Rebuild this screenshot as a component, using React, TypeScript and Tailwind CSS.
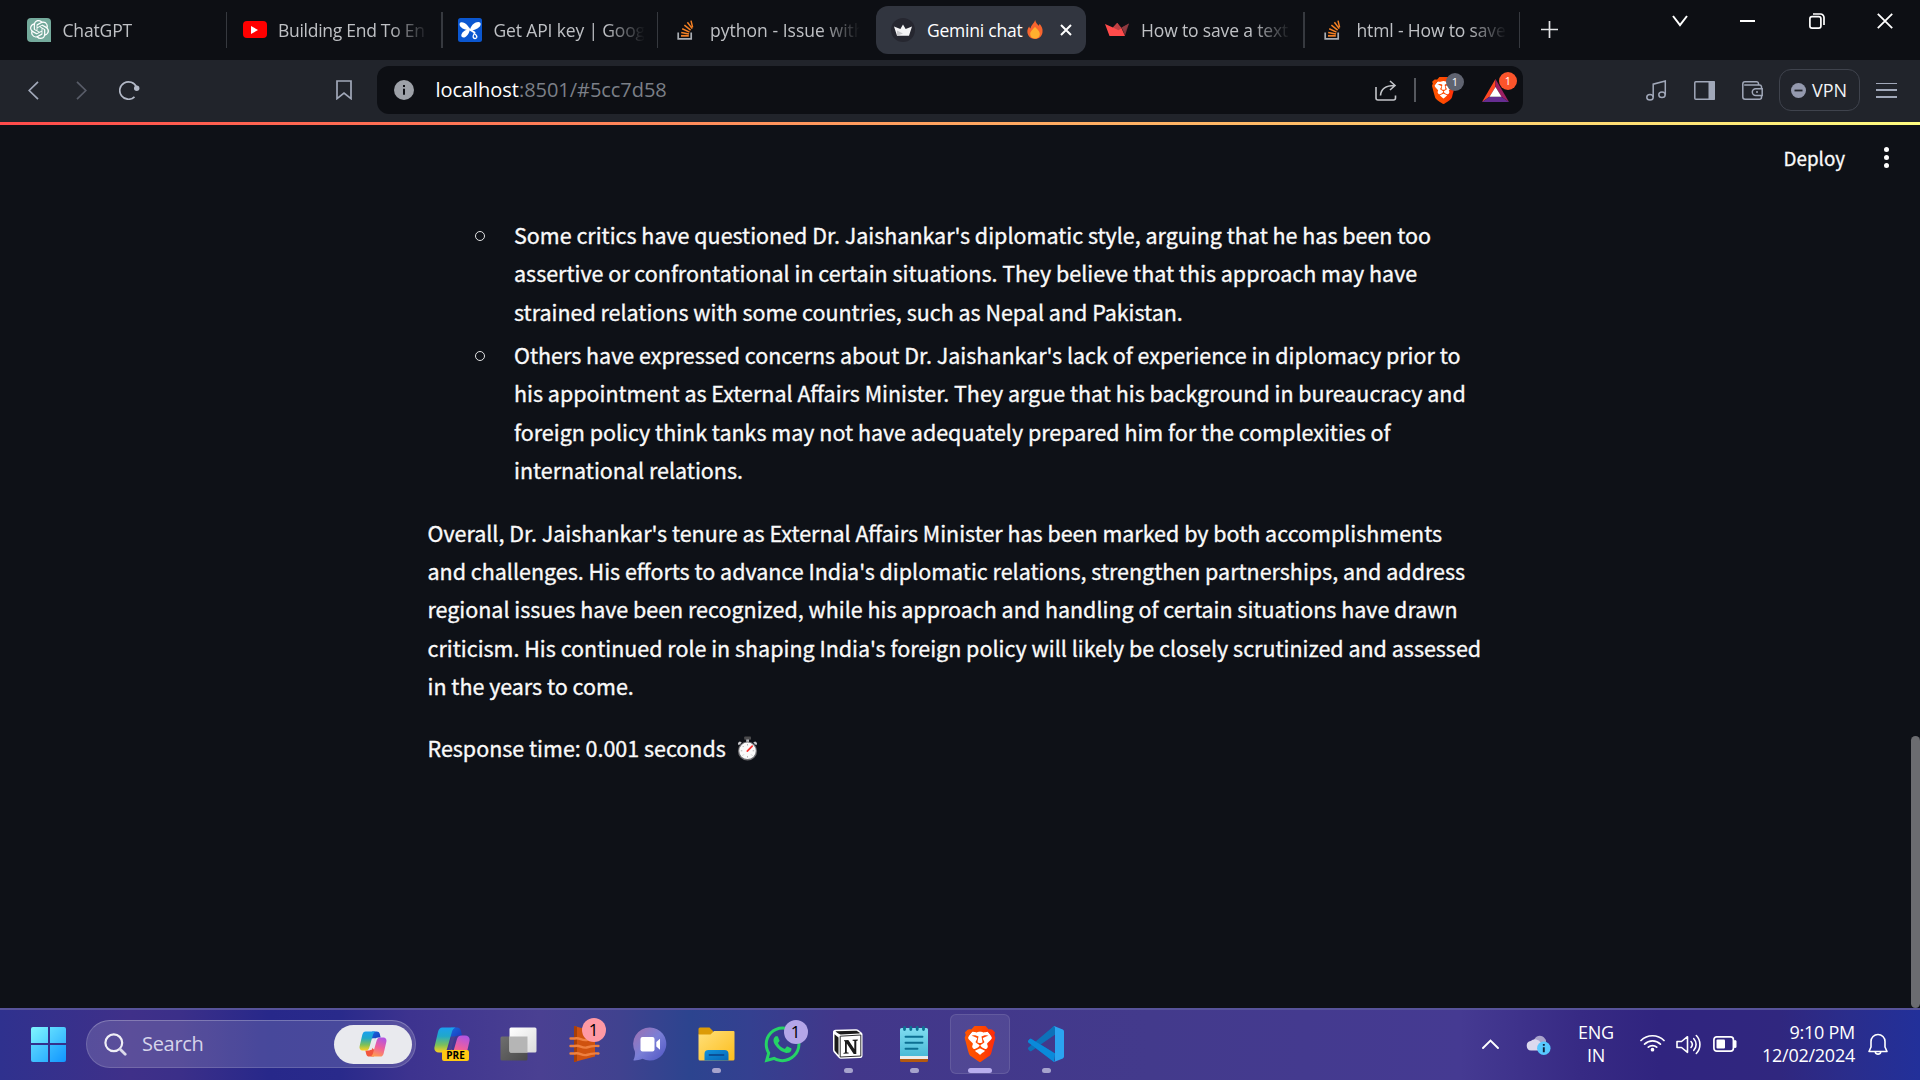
import React from "react";
import { SiOpenai, SiBrave } from "react-icons/si";
import { FaWhatsapp } from "react-icons/fa";

/* ---------- small drawings ---------- */

const StackOverflow = () => (
  <svg className="h-[20px] w-[17px]" viewBox="0 0 17 20" fill="none">
    <path d="M1.2 12.5v6.3h13v-6.3" stroke="#a9adb3" strokeWidth="1.7" />
    <path d="M4 15.8h7.8" stroke="#f48024" strokeWidth="1.8" />
    <path d="M4.2 12.4l7.8 1.6M5.2 8.8l7.3 3.3M7.4 5.2l6.2 5M10.4 2.2l4.8 6.4M14 .6l1.6 6.8" stroke="#f48024" strokeWidth="1.5" />
  </svg>
);

const GoogleAi = () => (
  <svg className="size-[24px]" viewBox="0 0 24 24">
    <rect width="24" height="24" rx="2.5" fill="#0b57d0" />
    <path d="M12.3 12.2C10.5 8 7.5 4 3.2 4.3 1.2 4.6 1 7 2.5 8.7c2.4 2.7 6.5 3.3 9.8 3.5z" fill="#fff" />
    <path d="M11.5 13.2C12.5 8.5 15.5 4 20.5 4c2.5.1 2.800 2.600 1.300 4.400-2.300 2.700-6.300 3.800-10.300 4.800z" fill="#fff" />
    <path d="M11.500 9.500c.8 4-1.500 8-4.500 9.700-2 1-4.300-.3-3.600-2.600.9-3 4.200-4.600 7.100-6.100z" fill="#fff" />
    <path d="M12.500 12l4 2.500" stroke="#fff" strokeWidth="2" strokeLinecap="round" />
    <path d="M16.300 15.500c1.800 1.200 3 2.600 2.400 4-.7 1.400-3 1.300-3.500-.2-.4-1.200.4-2.500 1.100-3.800z" fill="#0b57d0" stroke="#fff" strokeWidth="1.300" />
  </svg>
);

const Flame = () => (
  <svg className="h-[19px] w-[16px]" viewBox="0 0 16 19">
    <path d="M8.200 0c.4 2.700 2 4 3.500 5.700.5-.5.800-1.200.900-1.900C14.800 6.300 16 9 15.500 12.200 15 16.200 11.800 19 8 19S.8 16.200.4 12.500C.1 10 1 7.900 2.200 6.400c.2 1 .6 1.600 1.200 2C4.300 4.800 7.200 3.400 8.200 0z" fill="#f8652e" />
    <path d="M8 6.800c1.900 2.500 4.800 4.300 4.800 7.400C12.800 17 10.600 18.600 8 18.600S3.200 17 3.200 14.200C3.200 11.200 6.200 9.300 8 6.800z" fill="#ffb02e" />
  </svg>
);

const Stopwatch = () => (
  <svg className="h-[25px] w-[21px]" viewBox="0 0 21 25">
    <rect x="7.200" y=".5" width="6.800" height="3.200" rx=".8" fill="#4a4a4c" />
    <rect x="9.200" y="3.500" width="2.800" height="2.500" fill="#b9b9bd" />
    <path d="M3.200 8.200L1.500 9.300.9 7l1.800-1.400 2 .6zM17.800 8.200l1.700 1.100.6-2.300-1.800-1.400-2 .6z" fill="#c9c9cd" />
    <circle cx="10.500" cy="15" r="9.600" fill="#6e6e72" />
    <circle cx="10.500" cy="14.800" r="8.300" fill="#fafafa" />
    <path d="M10.500 8v1.500M10.500 20v1.500M3.800 14.800h1.500M15.700 14.800h1.500M5.700 10l1 1M15.300 19.600l-1-1M5.700 19.600l1-1" stroke="#aaaaae" strokeWidth=".9" />
    <path d="M10.300 15.200l4.900-5" stroke="#f8312f" strokeWidth="1.700" strokeLinecap="round" />
  </svg>
);

const BraveLion = ({ className = "", id }: { className?: string; id: string }) => (
  <span className="relative block">
    <svg className={className} viewBox="0 0 24 24">
      <defs>
        <linearGradient id={id} x1="0" x2="1">
          <stop offset="0" stopColor="#ff5601" />
          <stop offset=".5" stopColor="#ff4a00" />
          <stop offset="1" stopColor="#ff2a0a" />
        </linearGradient>
      </defs>
      <path d="M7 3.500h10l3.500 4-2.500 9-6 5.500-6-5.500-2.500-9z" fill="#fff" />
    </svg>
    <span className="absolute inset-0">
      <SiBrave className={className} fill={`url(#${id})`} />
    </span>
  </span>
);

const Copilot = ({ className = "", id, gap }: { className?: string; id: string; gap: string }) => (
  <svg className={className} viewBox="0 0 36 34">
    <defs>
      <linearGradient id={`${id}a`} x1="0" y1="0" x2="0" y2="1">
        <stop offset="0" stopColor="#1b9ff0" />
        <stop offset=".35" stopColor="#21a8c9" />
        <stop offset=".7" stopColor="#7cc05a" />
        <stop offset="1" stopColor="#ffd01f" />
      </linearGradient>
      <linearGradient id={`${id}b`} x1=".6" y1="0" x2=".3" y2="1">
        <stop offset="0" stopColor="#b455e0" />
        <stop offset=".5" stopColor="#f0609a" />
        <stop offset="1" stopColor="#ff9d4d" />
      </linearGradient>
      <linearGradient id={`${id}c`} x1="0" y1="0" x2="1" y2="1">
        <stop offset="0" stopColor="#1a6be0" />
        <stop offset="1" stopColor="#1a35b8" />
      </linearGradient>
    </defs>
    <path d="M17 .5h6c2 0 3.200 1 3.800 3L28 8.500h-3c-3 0-4.500 1-5.500 4L14 7z" fill={`url(#${id}c)`} />
    <path d="M19 33.500h-6c-2 0-3.200-1-3.800-3L8 25.500h3c3 0 4.500-1 5.500-4L22 27z" fill="#f2553c" />
    <path d="M8.500.5h13c-2 .8-3 2.500-3.600 4.600l-4.600 16C12.600 24 11 25.500 8 25.500H5c-3.600 0-5.300-2.600-4.400-6L4 5C4.800 2 6 .5 8.500.5z" fill={`url(#${id}a)`} />
    <path d="M27.500 33.500h-13c2-.8 3-2.500 3.600-4.600l4.600-16c.7-2.900 2.300-4.400 5.300-4.400h3c3.600 0 5.300 2.600 4.400 6L32 29c-.8 3-2 4.500-4.500 4.500z" fill={`url(#${id}b)`} />
    <path d="M17.200 9.500h4.300c-.8.900-1.300 2-1.700 3.500l-3.300 11.500h-3c.7-.8 1.100-1.800 1.500-3.200z" fill={gap} />
  </svg>
);

/* ---------- browser chrome ---------- */

type TabInfo = { icon: React.ReactNode; title: string; text: string; active?: boolean; rule: boolean };

const tabs: TabInfo[] = [
  {
    rule: false, title: "ChatGPT", text: "tracking-[-0.15px]",
    icon: (
      <span className="flex size-[24px] items-center justify-center rounded-[4px] rounded-br-none bg-[#74aa9c] text-white">
        <SiOpenai className="size-[19px]" />
      </span>
    ),
  },
  {
    rule: true, title: "Building End To En", text: "tracking-[-0.28px]",
    icon: (
      <span className="flex h-[17px] w-[24px] items-center justify-center rounded-[4px] bg-[#ff0000]">
        <svg className="h-[8px] w-[7px]" viewBox="0 0 7 8"><path d="M0 0l7 4-7 4z" fill="#fff" /></svg>
      </span>
    ),
  },
  { rule: true, title: "Get API key | Goog", text: "tracking-[-0.15px]", icon: <GoogleAi /> },
  { rule: true, title: "python - Issue with", text: "pl-[1px] tracking-[0.03px]", icon: <StackOverflow /> },
  {
    rule: false, active: true, title: "Gemini chat", text: "tracking-[-0.22px]",
    icon: (
      <span className="flex size-[24px] items-center justify-center rounded-full bg-[#262730] text-white">
        <svg className="h-[12px] w-[18px]" viewBox="0 0 24 15"><path d="M12 0l3.500 6L24 2.800 20 15H4L0 2.800 8.500 6z" fill="#f4f4f5" /><path d="M4 8l8 4-8 3z" fill="#c9c9cc" /></svg>
      </span>
    ),
  },
  {
    rule: false, title: "How to save a text", text: "pl-[1px] tracking-[-0.15px]",
    icon: (
      <svg className="h-[13px] w-[24px]" viewBox="0 0 24 13">
        <path d="M24 .4L16.500 4.600 20 12.400z" fill="#7d353b" />
        <path d="M0 1l8 3.600L12.200 0l4.300 5.200L20 13H4.500z" fill="#ff4b4b" />
        <path d="M12.200 0l4.300 5.200-3 2L8 4.600z" fill="#bd4043" />
        <path d="M16.500 4.800L24 .4l-4.200 8.100z" fill="#8e3a40" />
      </svg>
    ),
  },
  { rule: true, title: "html - How to save", text: "pl-[1px] tracking-[-0.15px]", icon: <StackOverflow /> },
];

function Tab({ t }: { t: TabInfo }) {
  return (
    <div className="flex h-[60px] w-[215.5px] shrink-0 items-center">
      <div className={t.rule ? "h-[36px] w-[1.5px] bg-[#36393f]" : "h-[36px] w-[1.5px]"} />
      <div
        className={
          t.active
            ? "ml-[2.5px] flex h-[48px] w-[210px] items-center rounded-[12px] bg-[#31353f] pl-[15px] text-white"
            : "flex h-[48px] w-[214px] items-center pl-[15.5px] text-[#bfc1c5]"
        }
      >
        <div className="flex size-[24px] shrink-0 items-center justify-center">{t.icon}</div>
        {t.active ? (
          <>
            <span className={`ml-[12px] whitespace-nowrap text-[17.5px] leading-[24px] ${t.text}`}>{t.title}</span>
            <div className="ml-[4px] flex"><Flame /></div>
            <svg className="ml-[17px] size-[12px]" viewBox="0 0 12 12"><path d="M1 1l10 10M11 1L1 11" stroke="#fff" strokeWidth="2" /></svg>
          </>
        ) : (
          <span
            className={`ml-[11.5px] w-[160px] whitespace-nowrap text-[17.5px] leading-[24px] [mask-image:linear-gradient(to_right,black_112px,transparent_151px)] ${t.text}`}
          >
            {t.title}
          </span>
        )}
      </div>
    </div>
  );
}

function TabStrip() {
  return (
    <div className="flex h-[60px] items-center bg-[#0d0f14] pb-[1px] pl-[10px]">
      {tabs.map((t) => <Tab key={t.title} t={t} />)}
      <div className="h-[36px] w-[1.5px] bg-[#36393f]" />
      <svg className="ml-[21px] size-[17px]" viewBox="0 0 17 17"><path d="M8.500 0v17M0 8.500h17" stroke="#e4e5e7" strokeWidth="1.700" /></svg>
      <div className="mb-[17px] ml-auto mr-[27px] flex items-center">
        <svg className="h-[12px] w-[16px]" viewBox="0 0 16 12"><path d="M1 1l7 9 7-9" fill="none" stroke="#fff" strokeWidth="2" /></svg>
        <div className="ml-[52px] h-[2px] w-[15px] bg-white" />
        <svg className="ml-[54px] size-[16px]" viewBox="0 0 16 16" fill="none" stroke="#fff" strokeWidth="1.700">
          <rect x=".9" y="3.600" width="11" height="11.500" rx="2.200" />
          <path d="M4 1h7.500A3.500 3.500 0 0115 4.500V12" />
        </svg>
        <svg className="ml-[52px] size-[16px]" viewBox="0 0 16 16"><path d="M.8.8l14.400 14.400M15.200.8L.8 15.200" stroke="#fff" strokeWidth="1.800" /></svg>
      </div>
    </div>
  );
}

function Toolbar() {
  return (
    <div className="flex h-[62px] items-center bg-[#21242b] pb-[2px] pl-[28px] text-[#a1a8b9]">
      <svg className="h-[19px] w-[11px]" viewBox="0 0 11 19"><path d="M10 .8L1.200 9.500 10 18.200" fill="none" stroke="currentColor" strokeWidth="1.700" /></svg>
      <svg className="ml-[37px] h-[19px] w-[11px]" viewBox="0 0 11 19"><path d="M1 .8l8.800 8.700L1 18.200" fill="none" stroke="#585c68" strokeWidth="1.700" /></svg>
      <svg className="ml-[32px] h-[20px] w-[21px]" viewBox="0 0 21 20">
        <path d="M17.500 7.200A8.700 8.700 0 1015.500 16.800" fill="none" stroke="#b3b9c7" strokeWidth="1.700" />
        <circle cx="17.700" cy="8.200" r="2.700" fill="#b3b9c7" />
      </svg>
      <svg className="ml-[196px] h-[20px] w-[16px]" viewBox="0 0 16 20"><path d="M1 1h14v17.600l-7-5.500-7 5.500z" fill="none" stroke="currentColor" strokeWidth="1.700" /></svg>

      <div className="ml-[25px] flex h-[48px] w-[1146px] items-center rounded-[12px] bg-[#0d0f14] pl-[17px]">
        <svg className="size-[20px]" viewBox="0 0 20 20">
          <circle cx="10" cy="10" r="10" fill="#9da1a8" />
          <path d="M10 8.800v6M10 5v2" stroke="#0d0f14" strokeWidth="2" />
        </svg>
        <div className="ml-[21.500px] whitespace-nowrap text-[20px] leading-[28px] tracking-[-0.040px] text-white">
          localhost<span className="text-[#7b7f87]">:8501/#5cc7d58</span>
        </div>
        <svg className="ml-auto h-[21px] w-[22px]" viewBox="0 0 22 21" fill="none" stroke="#c3c5c9" strokeWidth="1.600">
          <path d="M1 7v11c0 1.200.7 2 2 2h15.500c1.300 0 2-.8 2-2v-2.500" />
          <path d="M5.500 15.500C6 9 10 5.500 19.500 5.500M15 1l5 4.500-5 4.500" />
        </svg>
        <div className="ml-[17px] h-[24px] w-[2px] bg-[#55585e]" />
        <div className="relative ml-[14px]">
          <BraveLion id="lionSmall" className="size-[27px]" />
          <span className="absolute left-[16px] top-[-4px] flex h-[18px] w-[18px] items-center justify-center rounded-[9px] bg-[#5f6370] text-[11px] leading-[18px] text-white">1</span>
        </div>
        <div className="relative ml-[25px] mr-[14px]">
          <svg className="h-[23px] w-[27px]" viewBox="0 0 27 23">
            <path d="M13.500 0L0 23l7.500-5.300 6-9.700z" fill="#ff4724" />
            <path d="M13.500 0L27 23l-7.500-5.300-6-9.700z" fill="#9e1f63" />
            <path d="M0 23h27l-7.500-5.300h-12z" fill="#662d91" />
            <path d="M13.500 8l6 9.700h-12z" fill="#fff" />
          </svg>
          <span className="absolute left-[17px] top-[-7px] flex h-[18px] w-[18px] items-center justify-center rounded-[9px] bg-[#fb542b] text-[11px] leading-[18px] text-white">1</span>
        </div>
      </div>

      <div className="ml-auto flex items-center pr-[23px]">
        <svg className="size-[21px]" viewBox="0 0 21 21" fill="none" stroke="currentColor" strokeWidth="1.500">
          <ellipse cx="4" cy="17.300" rx="3.200" ry="2.800" />
          <ellipse cx="16" cy="14.800" rx="3.200" ry="2.800" />
          <path d="M7.200 17.300V4.200L19.300 1v13.800" />
        </svg>
        <svg className="ml-[27px] h-[19px] w-[21px]" viewBox="0 0 21 19">
          <rect x=".8" y=".8" width="19.400" height="17.400" rx="1" fill="none" stroke="currentColor" strokeWidth="1.500" />
          <path d="M14.500 0h5.500a1 1 0 011 1v17a1 1 0 01-1 1h-5.500z" fill="currentColor" />
        </svg>
        <svg className="ml-[27px] h-[19px] w-[21px]" viewBox="0 0 21 19" fill="none" stroke="currentColor" strokeWidth="1.500">
          <path d="M.8 3v13A2.200 2.200 0 003 18.200h14.500a2 2 0 002-2v-1.700M19.500 7.700V5.600a2 2 0 00-2-1.600H2.200M.8 3A2.200 2.200 0 013 .8h11.500a2 2 0 012 2V4" />
          <path d="M20.200 7.700h-6.500a3.400 3.400 0 000 6.800h6.500zM14 11.100h2" />
        </svg>
        <div className="ml-[16px] flex h-[42px] w-[81px] items-center rounded-[12px] border-[1.500px] border-[#3f434d] pl-[11px]">
          <svg className="size-[15px] shrink-0" viewBox="0 0 15 15"><circle cx="7.500" cy="7.500" r="7.500" fill="#9499ae" /><path d="M3.500 7.500h8" stroke="#21242b" strokeWidth="1.800" /></svg>
          <span className="ml-[6px] text-[18px] leading-[24px] text-[#f2f3f5]">VPN</span>
        </div>
        <div className="ml-[16px] flex h-[15px] w-[21px] flex-col justify-between">
          <div className="h-[1.500px] bg-[#a1a8b9]" /><div className="h-[1.500px] bg-[#a1a8b9]" /><div className="h-[1.500px] bg-[#a1a8b9]" />
        </div>
      </div>
    </div>
  );
}

/* ---------- page ---------- */

const bullets = [
  [
    "Some critics have questioned Dr. Jaishankar's diplomatic style, arguing that he has been too",
    "assertive or confrontational in certain situations. They believe that this approach may have",
    "strained relations with some countries, such as Nepal and Pakistan.",
  ],
  [
    "Others have expressed concerns about Dr. Jaishankar's lack of experience in diplomacy prior to",
    "his appointment as External Affairs Minister. They argue that his background in bureaucracy and",
    "foreign policy think tanks may not have adequately prepared him for the complexities of",
    "international relations.",
  ],
];

const overall = [
  "Overall, Dr. Jaishankar's tenure as External Affairs Minister has been marked by both accomplishments",
  "and challenges. His efforts to advance India's diplomatic relations, strengthen partnerships, and address",
  "regional issues have been recognized, while his approach and handling of certain situations have drawn",
  "criticism. His continued role in shaping India's foreign policy will likely be closely scrutinized and assessed",
  "in the years to come.",
];

const Lines = ({ lines }: { lines: string[] }) => (
  <>{lines.map((l) => <span key={l} className="block whitespace-nowrap">{l}</span>)}</>
);

function Page() {
  return (
    <div className="flex h-[886px] flex-col bg-[#0e1117] font-['Noto_Sans_CJK_SC','Noto_Sans',sans-serif] text-[#fafafa]">
      <div className="h-[3px] shrink-0 bg-[linear-gradient(to_right,#ff4b4b,#ffa560_50%,#ffbc67_67%,#fffd80)]" />
      <div className="flex min-h-0 flex-1">
        <div className="flex flex-1 flex-col">
          <div className="flex h-[65px] items-center">
            <span className="ml-auto text-[18.800px] leading-[28px] [-webkit-text-stroke:0.3px]">Deploy</span>
            <div className="ml-[39px] mr-[22px] flex flex-col gap-[3px]">
              <div className="size-[5px] rounded-full bg-white" /><div className="size-[5px] rounded-full bg-white" /><div className="size-[5px] rounded-full bg-white" />
            </div>
          </div>
          <div className="ml-[427.500px] mt-[26px] flex flex-col gap-[24px] text-[21.480px] leading-[38.400px] [-webkit-text-stroke:0.35px]">
            <ul className="flex flex-col gap-[4.800px] pl-[47.500px]">
              {bullets.map((b) => (
                <li key={b[0]} className="flex">
                  <span className="mt-[14.500px] h-[10px] w-[10px] shrink-0 rounded-full border-[1.200px] border-[#e2e3e4]" />
                  <p className="ml-[29px]"><Lines lines={b} /></p>
                </li>
              ))}
            </ul>
            <p><Lines lines={overall} /></p>
            <p className="flex h-[38px] items-center">Response time: 0.001 seconds<span className="ml-[11px]"><Stopwatch /></span></p>
          </div>
        </div>
        <div className="flex w-[9px] flex-col justify-end">
          <div className="h-[272px] rounded-[5px] bg-[#6b6c70]" />
        </div>
      </div>
    </div>
  );
}

/* ---------- taskbar ---------- */

const Cell = ({ children, mark }: { children: React.ReactNode; mark?: "dot" | "bar" }) => (
  <div className={mark === "bar"
    ? "relative mx-[3px] flex h-[60px] w-[60px] shrink-0 items-center justify-center rounded-[6px] border border-white/10 bg-white/8"
    : "relative flex h-[60px] w-[66px] shrink-0 items-center justify-center"}>
    {children}
    {mark === "dot" && <span className="absolute bottom-[1px] left-[29px] h-[5px] w-[9px] rounded-full bg-[#a6a3cd]" />}
    {mark === "bar" && <span className="absolute bottom-0 left-[17px] h-[5px] w-[24px] rounded-full bg-[#b9aeee]" />}
  </div>
);

function TaskIcons() {
  return (
    <>
      <Cell>
        <div className="relative">
          <Copilot id="cpTask" gap="#47408f" className="h-[34px] w-[36px]" />
          <span className="absolute left-[8px] top-[23px] flex h-[11px] w-[27px] items-center justify-center rounded-[2px] bg-[#ffc913] text-[10px] font-bold leading-[11px] text-black">PRE</span>
        </div>
      </Cell>
      <Cell>
        <svg className="h-[34px] w-[37px]" viewBox="0 0 37 34">
          <defs>
            <linearGradient id="tvA" x1="0" y1="0" x2="1" y2="1"><stop offset="0" stopColor="#6f6f6f" /><stop offset="1" stopColor="#4a4a4a" /></linearGradient>
            <linearGradient id="tvB" x1="0" y1="0" x2="1" y2="1"><stop offset="0" stopColor="#fff" /><stop offset="1" stopColor="#dcdcdc" /></linearGradient>
          </defs>
          <rect x=".5" y="9.500" width="27" height="24" rx="1.500" fill="url(#tvA)" />
          <rect x="9.500" y=".5" width="27" height="25" rx="1.500" fill="url(#tvB)" />
          <path d="M9.500 9.500h18v16h-16.500a1.500 1.500 0 01-1.500-1.500z" fill="#b5b5b5" />
        </svg>
      </Cell>
      <Cell>
        <div className="relative">
          <svg className="h-[36px] w-[31px]" viewBox="0 0 31 36">
            <path d="M5 0l21 5.500v25L5 36z" fill="#cf520f" />
            <path d="M5 0l3 .8v34.400L5 36z" fill="#a83f08" />
            <g fill="none" stroke="#ee8040" strokeWidth="2.400" strokeLinecap="round">
              <path d="M1.500 12.500h4c5-1.500 7 2.500 12 1.500 4-1.400 6-2 12-1.500" />
              <path d="M1.500 20h4c5-1.500 7 2.500 12 1.500 4-1.400 6-2 12-1.500" />
              <path d="M1.500 27.500h4c5-1.500 7 2.500 12 1.500 4-1.400 6-2 12-1.500" />
            </g>
          </svg>
          <span className="absolute left-[13px] top-[-8px] flex h-[24px] w-[24px] items-center justify-center rounded-full bg-[#ff99a4] text-[17px] leading-[24px] text-black">1</span>
        </div>
      </Cell>
      <Cell>
        <svg className="size-[34px]" viewBox="0 0 34 34">
          <defs><linearGradient id="chatG" x1="0" y1="0" x2="1" y2="1"><stop offset="0" stopColor="#a06fae" /><stop offset=".5" stopColor="#7a7fd6" /><stop offset="1" stopColor="#4f55c4" /></linearGradient></defs>
          <path d="M17 .5a16.500 16.500 0 11-7.500 31.300C6.500 32.800 3 33.800.8 33.500c-.6-.2-.3-1 .1-1.600.9-1.900 1.300-5 1-7.500A16.500 16.500 0 0117 .5z" fill="url(#chatG)" />
          <rect x="7.500" y="10" width="14" height="14.500" rx="2" fill="#fff" />
          <path d="M23.300 15l3.700-3.200v11l-3.700-3.200z" fill="#fff" />
        </svg>
      </Cell>
      <Cell mark="dot">
        <svg className="h-[34px] w-[37px]" viewBox="0 0 37 34">
          <defs>
            <linearGradient id="folG" x1="0" y1="0" x2="1" y2="1"><stop offset="0" stopColor="#ffe07a" /><stop offset="1" stopColor="#fdbd1c" /></linearGradient>
            <linearGradient id="folB" x1="0" y1="0" x2="1" y2="1"><stop offset="0" stopColor="#1292dc" /><stop offset="1" stopColor="#0667b8" /></linearGradient>
          </defs>
          <path d="M.5 2A1.500 1.500 0 012 .5h9.500L15 4v4H.5z" fill="#dc9b07" />
          <path d="M.5 7.500h12L16 4h19.500a1 1 0 011 1v27a1.500 1.500 0 01-1.500 1.500H2A1.500 1.500 0 01.5 32z" fill="url(#folG)" />
          <path d="M6.500 33.500V27a4 4 0 014-4h16a4 4 0 014 4v6.500z" fill="url(#folB)" />
          <path d="M11.500 28h14" stroke="#0a4f96" strokeWidth="1.800" strokeLinecap="round" />
        </svg>
      </Cell>
      <Cell>
        <div className="relative">
          <FaWhatsapp className="size-[41px] text-[#25d366]" />
          <span className="absolute left-[22px] top-[-4px] flex h-[24px] w-[24px] items-center justify-center rounded-full bg-[#b4a6e8] text-[17px] leading-[24px] text-black">1</span>
        </div>
      </Cell>
      <Cell mark="dot">
        <svg className="size-[30px]" viewBox="0 0 30 30">
          <path d="M2.500.8L22 .2c2 0 2.700.2 4 1.200l2.500 2c.8.700 1 1 1 2.200v20.900c0 1.600-.8 2.500-2.500 2.600L8.500 29.800c-1.400 0-2.200-.3-3-1.300L1 23.500c-.7-.9-1-1.500-1-2.500V3c0-1.200 1-2.100 2.500-2.200z" fill="#fff" />
          <path d="M3 2.300L22 1.700c1.300 0 1.800 0 2.700.7l2 1.400c.3.300 0 .6-.5.600L8 5.400c-1.300.1-1.900-.2-2.700-.8L2.700 2.800c-.2-.2-.1-.5.3-.5zM1.500 5.200l4 3.300V26L2.200 22.300c-.5-.6-.7-1-.7-1.800z" fill="#1a1a1a" />
          <path d="M7.200 7.200L27.800 6v21l-20.600 1z" fill="#fff" stroke="#1a1a1a" strokeWidth=".9" />
          <path d="M11 11.200l4.300-.3 6 9.200v-8l-1.700-.3v-1l5.200-.3v1l-1.500.4v13l-2.600.1-6.900-10.600v8.800l1.900.5v.9l-5.200.2v-.9l1.500-.5V12.300l-1-.1z" fill="#1a1a1a" />
        </svg>
      </Cell>
      <Cell mark="dot">
        <svg className="h-[36px] w-[28px]" viewBox="0 0 28 36">
          <defs><linearGradient id="noteG" x1="0" y1="0" x2="0" y2="1"><stop offset="0" stopColor="#7fdcf0" /><stop offset="1" stopColor="#4bbbd8" /></linearGradient></defs>
          <path d="M0 31h28v3.500a1.500 1.500 0 01-1.500 1.500h-25A1.500 1.500 0 010 34.500z" fill="#b4590f" />
          <path d="M0 29h28v4H0z" fill="#ececec" />
          <path d="M0 3.500A1.500 1.500 0 011.500 2h25A1.500 1.500 0 0128 3.500V30H0z" fill="url(#noteG)" />
          <path d="M5.500 10.800h17M5.500 16.800h17M5.500 22.800h12" stroke="#0c6f92" strokeWidth="1.900" strokeLinecap="round" />
          <path d="M4.500 1.500v2M10.800 1.500v2M17.200 1.500v2M23.500 1.500v2" stroke="#0c6f92" strokeWidth="2.800" strokeLinecap="round" />
        </svg>
      </Cell>
      <Cell mark="bar"><BraveLion id="lionTask" className="size-[36px]" /></Cell>
      <Cell mark="dot">
        <svg className="size-[36px]" viewBox="0 0 36 36">
          <path d="M26 0L8.200 16.500 3.500 13c-.6-.4-1.300-.4-1.800.1L.4 14.400c-.6.5-.6 1.400 0 2L26 36l1-8.500L12 18l15-9.500z" fill="#0d72b9" />
          <path d="M26 0L.4 21.600c-.6.500-.6 1.400 0 2l1.300 1.300c.5.500 1.200.5 1.800.1L27 8.500V0z" fill="#0d72b9" />
          <path d="M3.500 13c-.6-.4-1.300-.4-1.800.1L.4 14.400c-.6.500-.6 1.400 0 2L26 36l1-8.500z" fill="#0a8ada" />
          <path d="M26 0l8.800 3.600c.8.400 1.200 1 1.200 1.800v25.200c0 .8-.4 1.500-1.200 1.800L26 36c.6-.5 1-1.200 1-2V2c0-.8-.4-1.500-1-2z" fill="#2ba4f0" />
        </svg>
      </Cell>
    </>
  );
}

function Tray() {
  return (
    <div className="ml-auto flex items-center text-[18px] leading-[23px] text-white">
      <svg className="h-[10px] w-[17px]" viewBox="0 0 17 10"><path d="M1 9l7.500-7.500L16 9" fill="none" stroke="#fff" strokeWidth="1.900" strokeLinecap="round" /></svg>
      <svg className="ml-[27px] mt-[2px] h-[20px] w-[25px]" viewBox="0 0 25 20">
        <path d="M8 5a6 6 0 0110-2.500A6 6 0 0119 10H9z" fill="#aaa4cc" />
        <path d="M5 15.500a4.800 4.800 0 01-.3-9.500A6.500 6.500 0 0115 8l-1 7.500z" fill="#dcd9ee" />
        <circle cx="17.800" cy="13.300" r="6.700" fill="#57c8ff" />
        <path d="M17.800 12.200v5M17.800 9v1.800" stroke="#10233c" strokeWidth="1.900" />
      </svg>
      <div className="ml-[27px] w-[36px] text-center tracking-[-0.250px]">ENG<br />IN</div>
      <svg className="mb-[2px] ml-[26px] h-[18px] w-[25px]" viewBox="0 0 25 18" fill="none" stroke="#fff" strokeWidth="1.700" strokeLinecap="round">
        <path d="M1 6.500a16.300 16.300 0 0123 0M4.600 10.200a11.200 11.200 0 0115.800 0M8.300 13.200a6.200 6.200 0 018.400 0" />
        <circle cx="12.500" cy="15.700" r="1" fill="#fff" />
      </svg>
      <svg className="ml-[11px] h-[21px] w-[25px]" viewBox="0 0 25 21" fill="none" stroke="#fff" strokeWidth="1.600" strokeLinecap="round" strokeLinejoin="round">
        <path d="M1 7.500v6h4.500l6 4.800V2.700l-6 4.800z" />
        <path d="M15 7.500a4.500 4.500 0 010 6M17.800 4.700a8.500 8.500 0 010 11.600M20.300 1.500a13 13 0 010 18" />
      </svg>
      <svg className="ml-[12px] h-[16px] w-[24px]" viewBox="0 0 24 16">
        <rect x=".9" y=".9" width="19.500" height="14.200" rx="2.800" fill="none" stroke="#fff" strokeWidth="1.700" />
        <rect x="3.500" y="3.500" width="8.500" height="9" rx="1" fill="#fff" />
        <path d="M22 5.500v5" stroke="#fff" strokeWidth="3" strokeLinecap="round" />
      </svg>
      <div className="ml-[18px] w-[100px] text-right tracking-[-0.250px]">9:10 PM<br />12/02/2024</div>
      <svg className="ml-[13px] mr-[32px] h-[23px] w-[20px]" viewBox="0 0 20 23" fill="none" stroke="#fff" strokeWidth="1.600" strokeLinejoin="round">
        <path d="M1 18.500l2-4.500V8.500a7 7 0 0114 0V14l2 4.500z" />
        <path d="M7.200 19a2.900 2.900 0 005.600 0" />
      </svg>
    </div>
  );
}

function Taskbar() {
  return (
    <div className="flex h-[72px] items-center border-t-2 border-[#57539a] bg-[linear-gradient(to_right,#2f318e_0px,#3f3089_130px,#3b2f89_180px,#27288a_270px,#292a8b_340px,#3d338f_410px,#4a4092_540px,#40428f_620px,#2c448f_690px,#344090_750px,#42378a_840px,#433a8c_1150px,#453a92_1460px,#372a84_1580px,#30247f_1660px,#30277f_1780px,#2a2d8c_1850px,#22309a_1920px)] pb-[2px]">
      <div className="ml-[31px] grid size-[35px] grid-cols-2 gap-[2px]">
        <div className="rounded-tl-[2px] bg-linear-to-br from-[#7ff5ff] to-[#52d3ff]" />
        <div className="rounded-tr-[2px] bg-linear-to-br from-[#5fdcff] to-[#35b7ff]" />
        <div className="rounded-bl-[2px] bg-linear-to-br from-[#55d2ff] to-[#2cb0ff]" />
        <div className="rounded-br-[2px] bg-linear-to-br from-[#37baff] to-[#1096ff]" />
      </div>
      <div className="ml-[20px] flex h-[48px] w-[330px] shrink-0 items-center rounded-full border-[1.500px] border-white/15 border-t-white/25 bg-white/15 pl-[17px] pr-[3px]">
        <svg className="size-[23px]" viewBox="0 0 23 23" fill="none" strokeLinecap="round">
          <circle cx="9.800" cy="9.800" r="8.400" stroke="#f0eff6" strokeWidth="2.200" />
          <path d="M16.200 16.200l5 5" stroke="#dcdaea" strokeWidth="2.800" />
        </svg>
        <span className="ml-[15px] text-[20px] leading-[28px] tracking-[-0.300px] text-[#d6d4ea]">Search</span>
        <div className="ml-auto flex h-[39px] w-[78px] items-center justify-center rounded-full bg-[#e9eaee]">
          <Copilot id="cpPill" gap="#e9eaee" className="h-[26px] w-[28px]" />
        </div>
      </div>
      <div className="ml-[3px] flex"><TaskIcons /></div>
      <Tray />
    </div>
  );
}

export default function App() {
  return (
    <div className="flex h-[1080px] w-[1920px] flex-col overflow-hidden bg-[#0e1117] font-['Open_Sans','Noto_Sans',sans-serif]">
      <TabStrip />
      <Toolbar />
      <Page />
      <Taskbar />
    </div>
  );
}
